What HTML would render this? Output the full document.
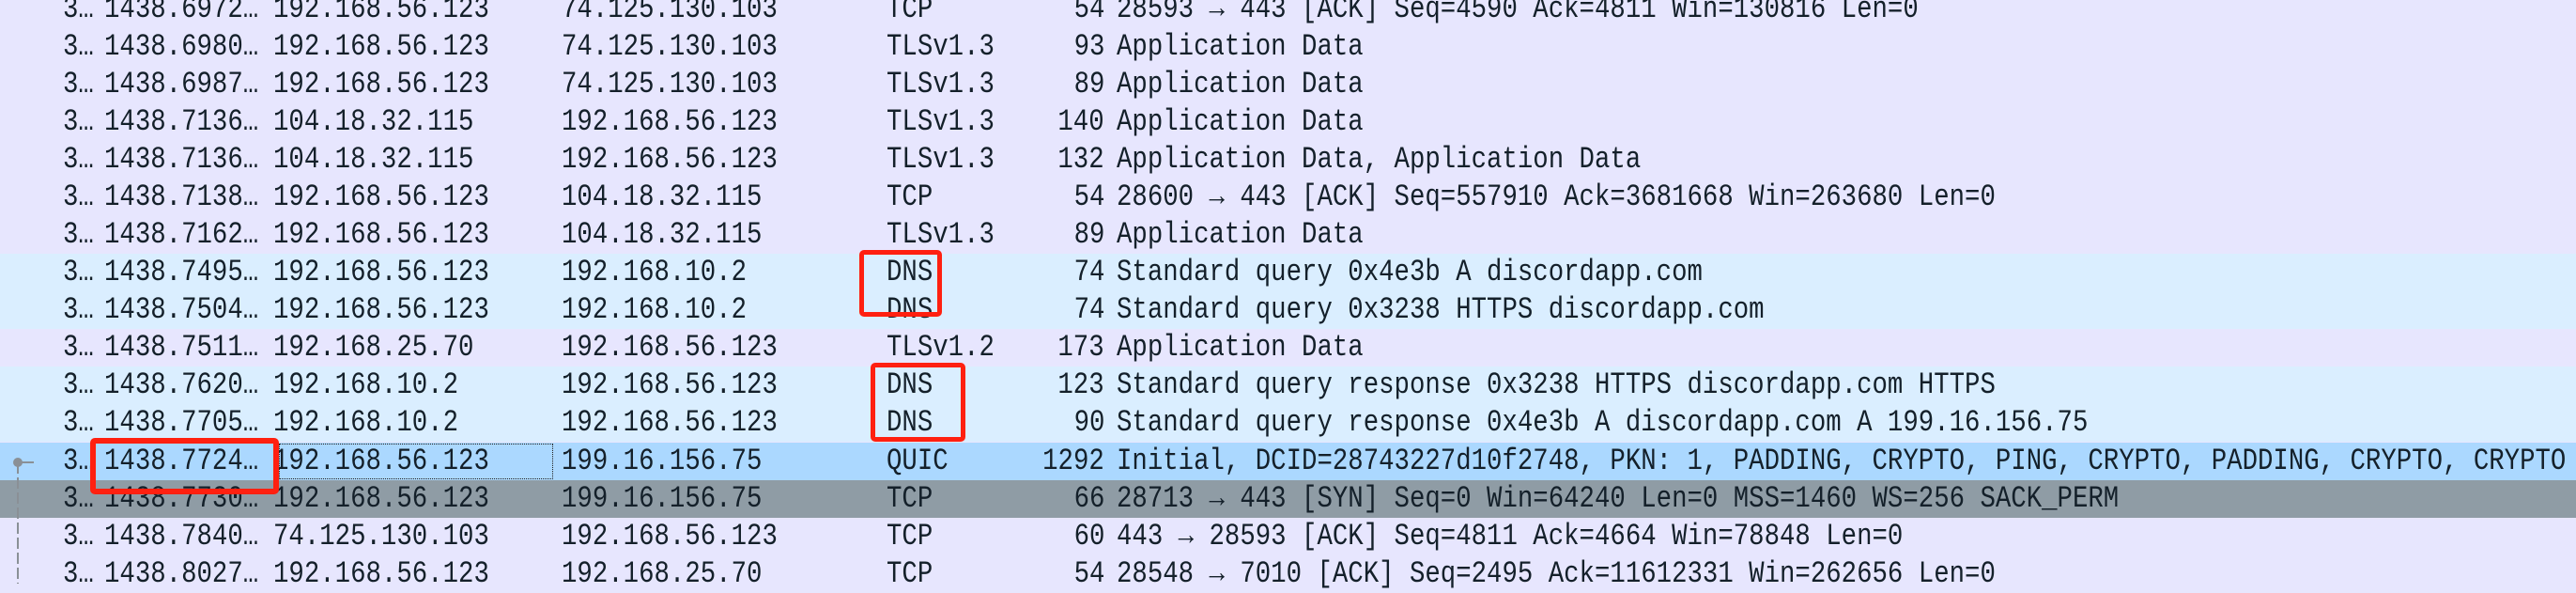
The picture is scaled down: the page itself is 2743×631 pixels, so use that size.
<!DOCTYPE html>
<html><head><meta charset="utf-8"><style>
html,body{margin:0;padding:0;}
body{width:2743px;height:621px;overflow:hidden;position:relative;background:#e7e6fe;font-family:"Liberation Mono",monospace;font-size:32px;color:#14202a;}
.r{position:absolute;left:0;width:2743px;height:40px;}
.c{position:absolute;top:0;line-height:40px;white-space:pre;transform:scaleX(0.855);transform-origin:left center;}
.rt{transform-origin:right center;text-align:right;}
.lav{background:#e7e6fe}.blu{background:#daeeff}.sel{background:#abd8ff}.gry{background:#8f9ca5}
.box{position:absolute;border:5px solid #ff2010;border-radius:5px;box-sizing:border-box;}
</style></head><body>
<div class="r lav" style="top:-10px"><span class="c" style="left:67px">3…</span><span class="c" style="left:111px">1438.6972…</span><span class="c" style="left:291px">192.168.56.123</span><span class="c" style="left:598px">74.125.130.103</span><span class="c" style="left:944px">TCP</span><span class="c rt" style="right:1567px">54</span><span class="c" style="left:1189px">28593 → 443 [ACK] Seq=4590 Ack=4811 Win=130816 Len=0</span></div>
<div class="r lav" style="top:30px"><span class="c" style="left:67px">3…</span><span class="c" style="left:111px">1438.6980…</span><span class="c" style="left:291px">192.168.56.123</span><span class="c" style="left:598px">74.125.130.103</span><span class="c" style="left:944px">TLSv1.3</span><span class="c rt" style="right:1567px">93</span><span class="c" style="left:1189px">Application Data</span></div>
<div class="r lav" style="top:70px"><span class="c" style="left:67px">3…</span><span class="c" style="left:111px">1438.6987…</span><span class="c" style="left:291px">192.168.56.123</span><span class="c" style="left:598px">74.125.130.103</span><span class="c" style="left:944px">TLSv1.3</span><span class="c rt" style="right:1567px">89</span><span class="c" style="left:1189px">Application Data</span></div>
<div class="r lav" style="top:110px"><span class="c" style="left:67px">3…</span><span class="c" style="left:111px">1438.7136…</span><span class="c" style="left:291px">104.18.32.115</span><span class="c" style="left:598px">192.168.56.123</span><span class="c" style="left:944px">TLSv1.3</span><span class="c rt" style="right:1567px">140</span><span class="c" style="left:1189px">Application Data</span></div>
<div class="r lav" style="top:150px"><span class="c" style="left:67px">3…</span><span class="c" style="left:111px">1438.7136…</span><span class="c" style="left:291px">104.18.32.115</span><span class="c" style="left:598px">192.168.56.123</span><span class="c" style="left:944px">TLSv1.3</span><span class="c rt" style="right:1567px">132</span><span class="c" style="left:1189px">Application Data, Application Data</span></div>
<div class="r lav" style="top:190px"><span class="c" style="left:67px">3…</span><span class="c" style="left:111px">1438.7138…</span><span class="c" style="left:291px">192.168.56.123</span><span class="c" style="left:598px">104.18.32.115</span><span class="c" style="left:944px">TCP</span><span class="c rt" style="right:1567px">54</span><span class="c" style="left:1189px">28600 → 443 [ACK] Seq=557910 Ack=3681668 Win=263680 Len=0</span></div>
<div class="r lav" style="top:230px"><span class="c" style="left:67px">3…</span><span class="c" style="left:111px">1438.7162…</span><span class="c" style="left:291px">192.168.56.123</span><span class="c" style="left:598px">104.18.32.115</span><span class="c" style="left:944px">TLSv1.3</span><span class="c rt" style="right:1567px">89</span><span class="c" style="left:1189px">Application Data</span></div>
<div class="r blu" style="top:270px"><span class="c" style="left:67px">3…</span><span class="c" style="left:111px">1438.7495…</span><span class="c" style="left:291px">192.168.56.123</span><span class="c" style="left:598px">192.168.10.2</span><span class="c" style="left:944px">DNS</span><span class="c rt" style="right:1567px">74</span><span class="c" style="left:1189px">Standard query 0x4e3b A discordapp.com</span></div>
<div class="r blu" style="top:310px"><span class="c" style="left:67px">3…</span><span class="c" style="left:111px">1438.7504…</span><span class="c" style="left:291px">192.168.56.123</span><span class="c" style="left:598px">192.168.10.2</span><span class="c" style="left:944px">DNS</span><span class="c rt" style="right:1567px">74</span><span class="c" style="left:1189px">Standard query 0x3238 HTTPS discordapp.com</span></div>
<div class="r lav" style="top:350px"><span class="c" style="left:67px">3…</span><span class="c" style="left:111px">1438.7511…</span><span class="c" style="left:291px">192.168.25.70</span><span class="c" style="left:598px">192.168.56.123</span><span class="c" style="left:944px">TLSv1.2</span><span class="c rt" style="right:1567px">173</span><span class="c" style="left:1189px">Application Data</span></div>
<div class="r blu" style="top:390px"><span class="c" style="left:67px">3…</span><span class="c" style="left:111px">1438.7620…</span><span class="c" style="left:291px">192.168.10.2</span><span class="c" style="left:598px">192.168.56.123</span><span class="c" style="left:944px">DNS</span><span class="c rt" style="right:1567px">123</span><span class="c" style="left:1189px">Standard query response 0x3238 HTTPS discordapp.com HTTPS</span></div>
<div class="r blu" style="top:430px"><span class="c" style="left:67px">3…</span><span class="c" style="left:111px">1438.7705…</span><span class="c" style="left:291px">192.168.10.2</span><span class="c" style="left:598px">192.168.56.123</span><span class="c" style="left:944px">DNS</span><span class="c rt" style="right:1567px">90</span><span class="c" style="left:1189px">Standard query response 0x4e3b A discordapp.com A 199.16.156.75</span></div>
<div class="r sel" style="top:471px"><span class="c" style="left:67px">3…</span><span class="c" style="left:111px">1438.7724…</span><span class="c" style="left:291px">192.168.56.123</span><span class="c" style="left:598px">199.16.156.75</span><span class="c" style="left:944px">QUIC</span><span class="c rt" style="right:1567px">1292</span><span class="c" style="left:1189px">Initial, DCID=28743227d10f2748, PKN: 1, PADDING, CRYPTO, PING, CRYPTO, PADDING, CRYPTO, CRYPTO</span></div>
<div class="r gry" style="top:511px"><span class="c" style="left:67px">3…</span><span class="c" style="left:111px">1438.7730…</span><span class="c" style="left:291px">192.168.56.123</span><span class="c" style="left:598px">199.16.156.75</span><span class="c" style="left:944px">TCP</span><span class="c rt" style="right:1567px">66</span><span class="c" style="left:1189px">28713 → 443 [SYN] Seq=0 Win=64240 Len=0 MSS=1460 WS=256 SACK_PERM</span></div>
<div class="r lav" style="top:551px"><span class="c" style="left:67px">3…</span><span class="c" style="left:111px">1438.7840…</span><span class="c" style="left:291px">74.125.130.103</span><span class="c" style="left:598px">192.168.56.123</span><span class="c" style="left:944px">TCP</span><span class="c rt" style="right:1567px">60</span><span class="c" style="left:1189px">443 → 28593 [ACK] Seq=4811 Ack=4664 Win=78848 Len=0</span></div>
<div class="r lav" style="top:591px"><span class="c" style="left:67px">3…</span><span class="c" style="left:111px">1438.8027…</span><span class="c" style="left:291px">192.168.56.123</span><span class="c" style="left:598px">192.168.25.70</span><span class="c" style="left:944px">TCP</span><span class="c rt" style="right:1567px">54</span><span class="c" style="left:1189px">28548 → 7010 [ACK] Seq=2495 Ack=11612331 Win=262656 Len=0</span></div>
<svg style="position:absolute;left:0;top:0" width="60" height="621">
<circle cx="19" cy="492" r="5" fill="#8a9096"/>
<line x1="19" y1="492" x2="36" y2="492" stroke="#8a9096" stroke-width="2"/>
<line x1="19" y1="492" x2="19" y2="621" stroke="#8a9096" stroke-width="2" stroke-dasharray="12,4"/>
</svg>
<div style="position:absolute;left:297px;top:472px;width:292px;height:38px;border:1px dotted #222;box-sizing:border-box"></div>
<div class="box" style="left:915px;top:266px;width:88px;height:71px"></div>
<div class="box" style="left:927px;top:386px;width:101px;height:84px"></div>
<div class="box" style="left:96px;top:466px;width:201px;height:60px;border-width:6px"></div>
</body></html>
